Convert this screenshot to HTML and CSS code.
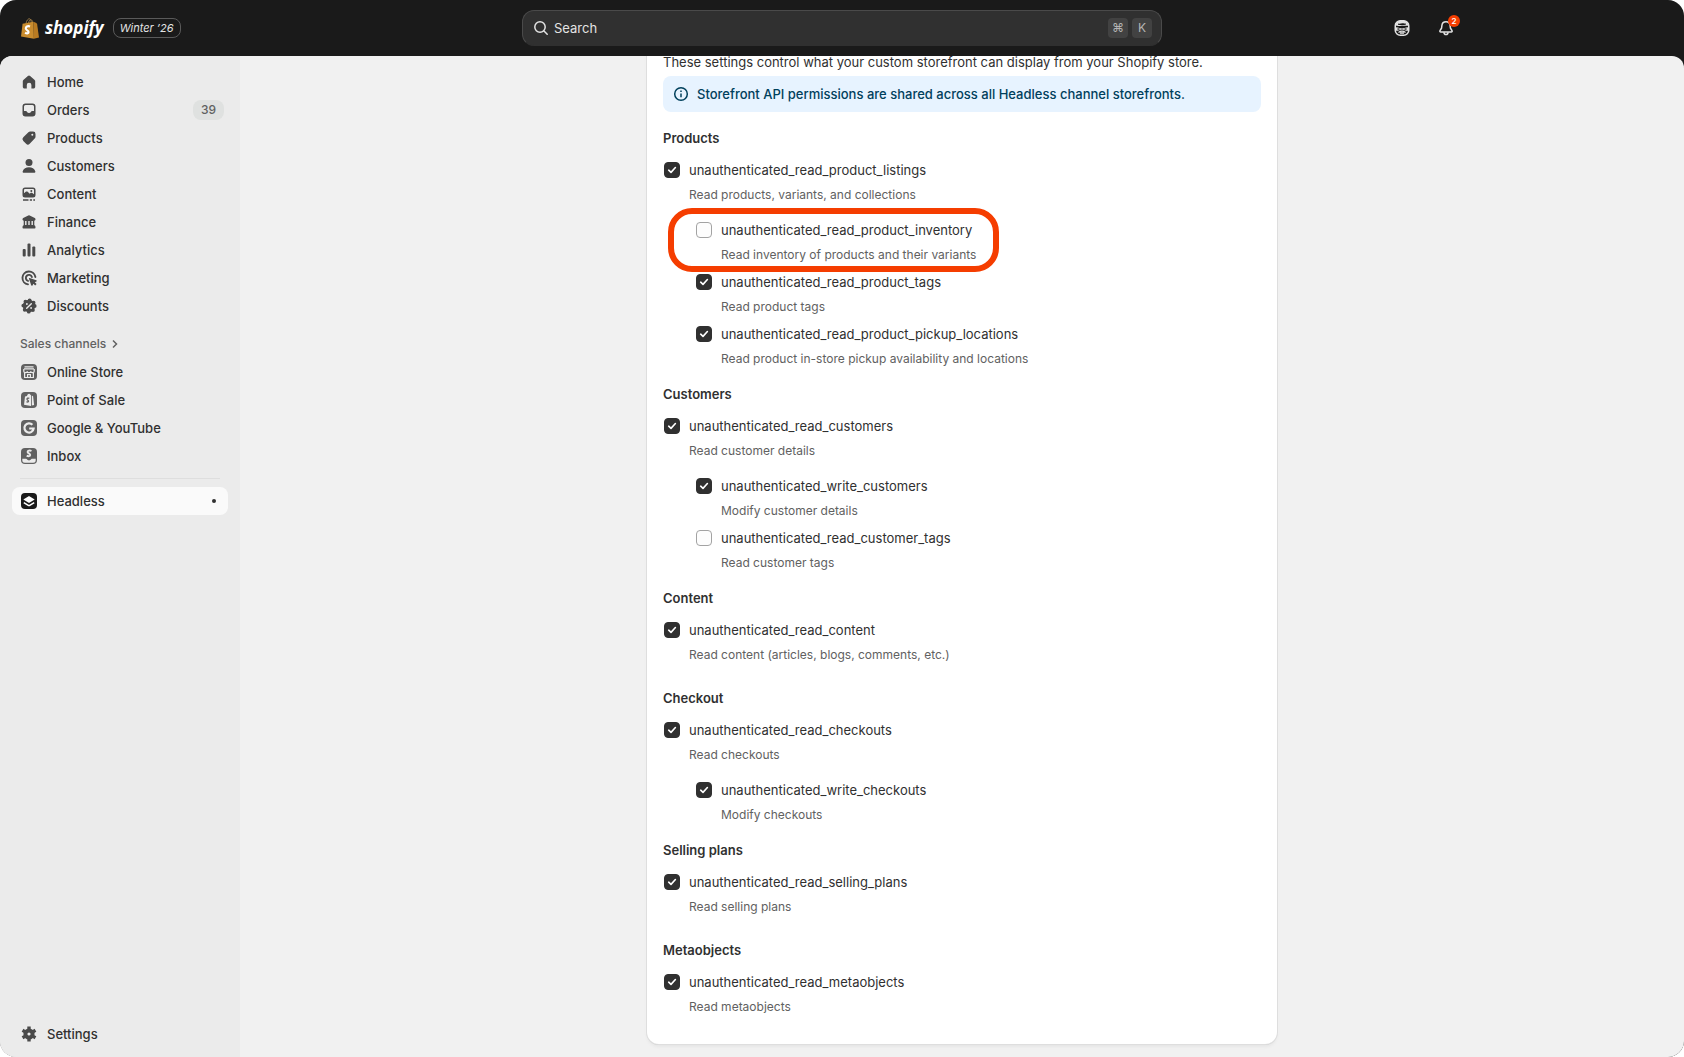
FILE: index.html
```html
<!DOCTYPE html>
<html lang="en">
<head>
    <meta charset="UTF-8">
    <meta name="viewport" content="width=device-width, initial-scale=1.0">
    <title>Headless - Storefront API permissions</title>
    <link rel="stylesheet" href="styles.css">
</head>
<body>
<div class="app">
    <header class="topbar">
        <div class="topbar-left">
            <a class="brand" href="#" aria-label="Shopify home">
                <svg class="bag" viewBox="0 0 18 21">
                    <path d="M5 5.500C5.500 2.500 7 .8 8.300.8s1.900 1.500 2 4M7.600 5C8 2.500 9 1.500 10 1.700s1.500 1.500 1.700 2.800" fill="none" stroke="#9a7a45" stroke-width="1"/>
                    <path d="M1.600 5.800 12.500 3.800l.4 17L0 18.600z" fill="#c98c2e"/>
                    <path d="m12.500 3.800 2.800 1.100.8 1L18 19.400l-5.100 1.400z" fill="#b97b22"/>
                    <path d="M9 8.500C6.500 7.500 4.700 8.800 4.800 10.500c.1 1.800 2.900 2 2.800 3.700-.1 1.400-2 1.500-3.500.4" fill="none" stroke="#fff" stroke-width="2.100"/>
                </svg>
                <span class="brand-name">shopify</span>
            </a>
            <a class="edition" href="#">Winter ’26</a>
        </div>
        <button class="search" type="button">
            <svg class="search-icon" viewBox="0 0 16 16"><circle cx="7" cy="7" r="5.200"/><path d="m11 11 3.200 3.200"/></svg>
            <span class="search-text">Search</span>
            <kbd>⌘</kbd>
            <kbd>K</kbd>
        </button>
        <div class="actions">
            <button class="icon-btn" type="button" aria-label="Sidekick">
                <svg viewBox="0 0 16 18">
                    <rect x="1.250" y="1.750" width="13.500" height="14.500" rx="5" fill="none" stroke="#e3e3e3" stroke-width="1.500"/>
                    <path d="M1.500 6.500C2 3.500 4 1.500 8 1.500s6 2 6.500 5c-1.500.7-3.500.2-5.500.2-3 0-5 .7-7.500-.2z" fill="#e3e3e3"/>
                    <path d="M4 4.500c2 .6 3-.2 4.500-.2 1.700 0 2 .6 3.500.3v1c-2 .8-6 .6-8 .2z" fill="#1a1a1a"/>
                    <path d="M1.500 8.200c3-.2 4.700 1.300 6.500 1.300s3.500-1.500 6.500-1.300v3.600c-2.500.3-4.500-1.300-6.500-1.300s-4 1.600-6.500 1.300z" fill="#e3e3e3"/>
                    <path d="M3.500 9.300c1.200 0 2 .3 2.600.7-.6.6-1.700.9-2.600.7zM12.500 9.300c-1.200 0-2 .3-2.600.7.600.6 1.700.9 2.600.7z" fill="#1a1a1a"/>
                    <path d="M4.500 13.500c2-1.500 5-1.500 7 0M6 14h4" fill="none" stroke="#e3e3e3" stroke-width="1.300"/>
                </svg>
            </button>
            <button class="icon-btn" type="button" aria-label="Notifications, 2 unread">
                <svg viewBox="0 0 16 18" fill="none" stroke="#e3e3e3" stroke-width="1.500" stroke-linejoin="round">
                    <path d="M8 2.700C5.400 2.700 4.100 4.300 3.900 6.500L3.600 9 2 11.600c-.4.700 0 1.400.8 1.400h10.400c.8 0 1.200-.7.800-1.400L12.400 9l-.3-2.500C11.900 4.300 10.600 2.700 8 2.700z"/>
                    <path d="M6 13.200c0 3.200 4 3.200 4 0"/>
                </svg>
                <span class="count">2</span>
            </button>
        </div>
    </header>

    <div class="frame">
        <nav class="sidebar">
            <ul class="nav-list">
                <li><a href="#">
                    <svg viewBox="0 0 20 20"><path d="M8.900 3.900a1.700 1.700 0 0 1 2.200 0l4.300 3.800c.5.400.8.900.8 1.400v5.600c0 1-.8 1.800-1.800 1.800h-2V13a2.300 2.300 0 0 0-4.600 0v3.500H5.600c-1 0-1.800-.8-1.800-1.800V9.100c0-.5.300-1 .8-1.400z"/></svg>
                    <span>Home</span></a></li>
                <li><a href="#">
                    <svg viewBox="0 0 20 20"><path fill-rule="evenodd" d="M6.500 3.500h7a3 3 0 0 1 3 3v7a3 3 0 0 1-3 3h-7a3 3 0 0 1-3-3v-7a3 3 0 0 1 3-3zM6.500 5A1.500 1.500 0 0 0 5 6.500V11h1.800c.7 0 1 .4 1.300.9.400.7 1 1.100 1.900 1.100s1.500-.4 1.900-1.100c.3-.5.600-.9 1.300-.9H15V6.500A1.500 1.500 0 0 0 13.500 5z"/></svg>
                    <span>Orders</span><em class="tally">39</em></a></li>
                <li><a href="#">
                    <svg viewBox="0 0 20 20"><path fill-rule="evenodd" d="M11.200 3.600h2.900a2.400 2.400 0 0 1 2.400 2.400v2.800c0 .7-.3 1.300-.8 1.800l-5 5.100a2.500 2.500 0 0 1-3.600 0l-2.800-2.800a2.500 2.500 0 0 1 0-3.600l5.100-5c.5-.5 1.100-.7 1.800-.7zM13.300 7.700a1 1 0 1 0 0-2 1 1 0 0 0 0 2z"/></svg>
                    <span>Products</span></a></li>
                <li><a href="#">
                    <svg viewBox="0 0 20 20"><circle cx="10" cy="6.500" r="3.500"/><path d="M3.700 15.200c.8-2.600 3.300-4 6.300-4s5.500 1.400 6.300 4c.3 1-.4 1.600-1.300 1.600H5c-.9 0-1.600-.6-1.300-1.600z"/></svg>
                    <span>Customers</span></a></li>
                <li><a href="#">
                    <svg viewBox="0 0 20 20"><path fill-rule="evenodd" d="M6 3.500h8a2.500 2.500 0 0 1 2.500 2.500v5a2.500 2.500 0 0 1-2.500 2.500H6A2.500 2.500 0 0 1 3.500 11V6A2.500 2.500 0 0 1 6 3.500zM6 5a1 1 0 0 0-1 1v3.200l1.700-1.400c.7-.5 1.400-.5 2 0l2 1.900.8-.6c.6-.4 1.200-.4 1.800 0l1.700 1.200V6a1 1 0 0 0-1-1z"/><circle cx="12.300" cy="6.900" r="1"/><path d="M4 15.300h5.500v1.400H4zM10.800 15.300H13v1.400h-2.200zM14.300 15.300H16v1.400h-1.700z"/></svg>
                    <span>Content</span></a></li>
                <li><a href="#">
                    <svg viewBox="0 0 20 20"><path d="M9.300 3.500a1.800 1.800 0 0 1 1.400 0L15.800 6c1.200.6.900 2.700-.5 2.700v4.600c.9.300 1.200 1 1.200 2.200 0 .5-.3.900-.8.900H4.300c-.5 0-.8-.4-.8-.9 0-1.200.3-1.900 1.200-2.200V8.700c-1.400 0-1.700-2.100-.5-2.700z"/><path d="M6.800 9v4M10 9v4M13.200 9v4" stroke="#ebebeb" stroke-width="1.400"/></svg>
                    <span>Finance</span></a></li>
                <li><a href="#">
                    <svg viewBox="0 0 20 20"><rect x="3.700" y="9" width="3" height="7.500" rx="1"/><rect x="8.500" y="3.500" width="3" height="13" rx="1"/><rect x="13.300" y="6.500" width="3" height="10" rx="1"/></svg>
                    <span>Analytics</span></a></li>
                <li><a href="#">
                    <svg viewBox="0 0 20 20"><path d="M16.400 9A6.500 6.500 0 1 0 9 16.400M12.900 9A3.100 3.100 0 1 0 9 12.900" fill="none" stroke="#4a4a4a" stroke-width="1.900" stroke-linecap="round"/><path d="m10.600 9.900 6.700 2.300c.6.200.6 1 .1 1.300l-1.600.8 1.800 1.800-1.400 1.400-1.800-1.800-.9 1.700c-.3.500-1.100.5-1.300-.1l-2.300-6.700c-.1-.4.300-.8.700-.7z"/></svg>
                    <span>Marketing</span></a></li>
                <li><a href="#">
                    <svg viewBox="0 0 20 20"><circle cx="10" cy="10" r="6.200"/><circle cx="10" cy="10" r="5.700" fill="none" stroke="#4a4a4a" stroke-width="3.800" stroke-linecap="round" stroke-dasharray="0 4.477"/><path d="m7.700 12.300 4.600-4.600" stroke="#ebebeb" stroke-width="1.400" stroke-linecap="round"/><circle cx="7.900" cy="8" r=".9" fill="#ebebeb"/><circle cx="12.100" cy="12" r=".9" fill="#ebebeb"/></svg>
                    <span>Discounts</span></a></li>
            </ul>

            <a class="nav-heading" href="#">Sales channels
                <svg viewBox="0 0 8 10"><path d="m2 1.500 3.500 3.500L2 8.500"/></svg>
            </a>
            <ul class="nav-list">
                <li><a href="#">
                    <svg viewBox="0 0 20 20"><rect x="2" y="2" width="16" height="16" rx="4" fill="#616161"/><path d="M5.500 4.800h9M5 6.800h10M4.800 7v2.200c0 2 3.400 2 3.400 0 0 2 3.600 2 3.600 0 0 2 3.400 2 3.400 0V7M5.600 11v4.500h8.800V11M8.600 15.500v-3h2.800v3" fill="none" stroke="#ebebeb" stroke-width="1.200"/></svg>
                    <span>Online Store</span></a></li>
                <li><a href="#">
                    <svg viewBox="0 0 20 20"><rect x="2" y="2" width="16" height="16" rx="4" fill="#616161"/><path d="M6 6.500 8 6c.4-1.800 1.500-2.500 2.300-2.300L12 5.300v10.600l-7-1.200zM12.800 5.500l1.300.7 1 8.800-2.300.6z" fill="#ebebeb"/><path d="M10.300 8.300c-1.400-.6-2.400 0-2.300.9.100 1 1.600 1.100 1.500 2.100 0 .8-1.100.9-2 .3" fill="none" stroke="#616161" stroke-width="1.300"/></svg>
                    <span>Point of Sale</span></a></li>
                <li><a href="#">
                    <svg viewBox="0 0 20 20"><rect x="2" y="2" width="16" height="16" rx="4" fill="#616161"/><path d="M13.400 6.800A4.600 4.600 0 1 0 14.600 10.500H10.200" fill="none" stroke="#ebebeb" stroke-width="2.200"/></svg>
                    <span>Google &amp; YouTube</span></a></li>
                <li><a href="#">
                    <svg viewBox="0 0 20 20"><rect x="2" y="2" width="16" height="16" rx="4" fill="#616161"/><path d="M3.300 12.800h3.900c.6 0 .8 1.600 2.800 1.600s2.200-1.600 2.800-1.600h3.900v1.400a2.500 2.500 0 0 1-2.500 2.500H5.800a2.500 2.500 0 0 1-2.500-2.500z" fill="#ebebeb"/><path d="M12.500 5c-2-1-3.900-.3-3.900 1 0 1.500 2.700 1.400 2.600 3-.1 1.400-2 1.500-3.500.6" fill="none" stroke="#ebebeb" stroke-width="1.900"/></svg>
                    <span>Inbox</span></a></li>
            </ul>

            <hr class="nav-rule">
            <ul class="nav-list">
                <li><a class="active" href="#" aria-current="page">
                    <svg viewBox="0 0 20 20"><rect x="2" y="2" width="16" height="16" rx="4" fill="#1a1a1a"/><path d="m4.300 8.500 4.900-3.100c.5-.3 1.100-.3 1.600 0l4.900 3.100-4.900 3c-.5.300-1.100.3-1.600 0z" fill="#fff"/><path d="m4.800 11.600 4.500 2.700c.4.300 1 .3 1.400 0l4.500-2.700" fill="none" stroke="#fff" stroke-width="1.500"/></svg>
                    <span>Headless</span><i class="dot"></i></a></li>
            </ul>

            <ul class="nav-list nav-bottom">
                <li><a href="#">
                    <svg viewBox="0 0 20 20"><circle cx="10" cy="10" r="3.600" fill="none" stroke="#4a4a4a" stroke-width="4"/><path d="M10 4.200v2M10 13.800v2M5 7.100l1.700 1M13.300 11.900l1.700 1M5 12.900l1.700-1M13.300 8.100l1.700-1" stroke="#4a4a4a" stroke-width="3.400" stroke-linecap="square"/></svg>
                    <span>Settings</span></a></li>
            </ul>
        </nav>

        <main class="content">
            <section class="card">
                <p class="intro">These settings control what your custom storefront can display from your Shopify store.</p>
                <div class="banner">
                    <svg viewBox="0 0 16 16"><circle cx="8" cy="8" r="6.300"/><path d="M8 7.500v3.700M8 4.400v1.500"/></svg>
                    <p>Storefront API permissions are shared across all Headless channel storefronts.</p>
                </div>

                <fieldset class="group">
                    <legend>Products</legend>
                    <div class="scope">
                        <input type="checkbox" id="product-listings" checked>
                        <label for="product-listings">unauthenticated_read_product_listings</label>
                        <p>Read products, variants, and collections</p>
                    </div>
                    <div class="nested">
                        <div class="scope highlight">
                            <input type="checkbox" id="product-inventory">
                            <label for="product-inventory">unauthenticated_read_product_inventory</label>
                            <p>Read inventory of products and their variants</p>
                        </div>
                        <div class="scope">
                            <input type="checkbox" id="product-tags" checked>
                            <label for="product-tags">unauthenticated_read_product_tags</label>
                            <p>Read product tags</p>
                        </div>
                        <div class="scope">
                            <input type="checkbox" id="pickup-locations" checked>
                            <label for="pickup-locations">unauthenticated_read_product_pickup_locations</label>
                            <p>Read product in-store pickup availability and locations</p>
                        </div>
                    </div>
                </fieldset>

                <fieldset class="group">
                    <legend>Customers</legend>
                    <div class="scope">
                        <input type="checkbox" id="read-customers" checked>
                        <label for="read-customers">unauthenticated_read_customers</label>
                        <p>Read customer details</p>
                    </div>
                    <div class="nested">
                        <div class="scope">
                            <input type="checkbox" id="write-customers" checked>
                            <label for="write-customers">unauthenticated_write_customers</label>
                            <p>Modify customer details</p>
                        </div>
                        <div class="scope">
                            <input type="checkbox" id="customer-tags">
                            <label for="customer-tags">unauthenticated_read_customer_tags</label>
                            <p>Read customer tags</p>
                        </div>
                    </div>
                </fieldset>

                <fieldset class="group">
                    <legend>Content</legend>
                    <div class="scope">
                        <input type="checkbox" id="read-content" checked>
                        <label for="read-content">unauthenticated_read_content</label>
                        <p>Read content (articles, blogs, comments, etc.)</p>
                    </div>
                    <div class="nested"></div>
                </fieldset>

                <fieldset class="group">
                    <legend>Checkout</legend>
                    <div class="scope">
                        <input type="checkbox" id="read-checkouts" checked>
                        <label for="read-checkouts">unauthenticated_read_checkouts</label>
                        <p>Read checkouts</p>
                    </div>
                    <div class="nested">
                        <div class="scope">
                            <input type="checkbox" id="write-checkouts" checked>
                            <label for="write-checkouts">unauthenticated_write_checkouts</label>
                            <p>Modify checkouts</p>
                        </div>
                    </div>
                </fieldset>

                <fieldset class="group">
                    <legend>Selling plans</legend>
                    <div class="scope">
                        <input type="checkbox" id="selling-plans" checked>
                        <label for="selling-plans">unauthenticated_read_selling_plans</label>
                        <p>Read selling plans</p>
                    </div>
                    <div class="nested"></div>
                </fieldset>

                <fieldset class="group">
                    <legend>Metaobjects</legend>
                    <div class="scope">
                        <input type="checkbox" id="metaobjects" checked>
                        <label for="metaobjects">unauthenticated_read_metaobjects</label>
                        <p>Read metaobjects</p>
                    </div>
                    <div class="nested"></div>
                </fieldset>
            </section>
        </main>
    </div>
</div>
</body>
</html>
```
FILE: styles.css
```css
* {
    box-sizing: border-box;
}
body {
    margin: 0;
    background: #fff;
    color: #303030;
    font-family: Inter, "Liberation Sans", sans-serif;
    font-size: 13px;
    line-height: 20px;
}
p, ul {
    margin: 0;
    padding: 0;
}
ul {
    list-style: none;
}
a {
    color: inherit;
    text-decoration: none;
}
button {
    font: inherit;
    color: inherit;
    border: 0;
    padding: 0;
    background: none;
}
.app {
    display: flex;
    flex-direction: column;
    height: 100vh;
    background: #1a1a1a;
    border-radius: 16px;
    overflow: hidden;
}

/* Top bar */
.topbar {
    display: grid;
    grid-template-columns: 1fr minmax(auto, 640px) 1fr;
    align-items: center;
    height: 56px;
    flex: none;
    padding: 0 21px;
    color: #e3e3e3;
}
.topbar-left {
    display: flex;
    align-items: center;
    gap: 9px;
}
.brand {
    display: flex;
    align-items: center;
    gap: 6px;
}
.bag {
    width: 18px;
    height: 21px;
}
.brand-name {
    color: #fff;
    font-family: "Noto Sans", "Open Sans", sans-serif;
    font-size: 17px;
    font-style: italic;
    font-weight: 700;
}
.edition {
    padding: 0 6px;
    border: 1px solid #5a5a5a;
    border-radius: 8px;
    font-size: 11px;
    line-height: 18px;
    font-style: italic;
}
.search {
    display: flex;
    align-items: center;
    height: 36px;
    padding: 0 9px 0 10px;
    background: #303030;
    border: 1px solid #4a4a4a;
    border-bottom-color: #303030;
    border-radius: 12px;
    text-align: left;
}
.search-icon {
    width: 16px;
    height: 16px;
    margin-right: 5px;
    fill: none;
    stroke: #e3e3e3;
    stroke-width: 1.5;
    stroke-linecap: round;
}
.search-text {
    flex: 1;
}
kbd {
    width: 20px;
    margin-left: 4px;
    border-radius: 4px;
    background: #424242;
    color: #b5b5b5;
    font-family: Inter, "DejaVu Sans", sans-serif;
    font-size: 12px;
    text-align: center;
}
.actions {
    display: flex;
    justify-self: end;
    gap: 28px;
    margin-right: 209px;
}
.icon-btn {
    position: relative;
    display: flex;
}
.icon-btn svg {
    width: 16px;
    height: 18px;
}
.count {
    position: absolute;
    top: -4px;
    right: -6px;
    width: 12px;
    border-radius: 6px;
    background: #f53d00;
    color: #fff;
    font-size: 8px;
    line-height: 12px;
    font-weight: 600;
}

.frame {
    display: flex;
    flex: 1;
    min-height: 0;
    border-radius: 12px 12px 0 0;
    background: #f1f1f1;
    overflow: hidden;
}

/* Sidebar */
.sidebar {
    display: flex;
    flex-direction: column;
    flex: none;
    width: 240px;
    padding: 12px 12px 9px;
    background: #ebebeb;
}
.nav-list a {
    display: flex;
    align-items: center;
    gap: 8px;
    height: 28px;
    padding: 0 4px 0 7px;
    border-radius: 8px;
    font-weight: 500;
}
.nav-list svg {
    width: 20px;
    height: 20px;
    fill: #4a4a4a;
}
.nav-list span {
    flex: 1;
}
.tally {
    padding: 0 8px;
    border-radius: 8px;
    background: #dfe1e0;
    color: #616161;
    font-size: 12px;
    font-style: normal;
}
.nav-list .active {
    background: #fafafa;
}
.dot {
    width: 4px;
    height: 4px;
    margin-right: 8px;
    border-radius: 2px;
    background: #303030;
}
.nav-heading {
    display: flex;
    align-items: center;
    gap: 5px;
    margin-top: 10px;
    padding: 4px 8px;
    color: #616161;
    font-size: 12px;
    font-weight: 500;
}
.nav-heading svg {
    width: 8px;
    height: 10px;
    fill: none;
    stroke: #616161;
    stroke-width: 1.5;
}
.nav-rule {
    margin: 8px;
    border: 0;
    border-top: 1px solid #dedede;
}
.nav-bottom {
    margin-top: auto;
}

/* Permissions card */
.content {
    flex: 1;
    overflow: hidden;
    padding-bottom: 13px;
}
.card {
    max-width: 630px;
    margin: -20px auto 0;
    padding: 16px 16px 19px;
    background: #fff;
    border-radius: 12px;
    box-shadow: 0 0 0 1px #dedede, 0 1px 0 #cccccc, 0 3px 3px #e6e6e6;
}
.banner {
    display: flex;
    align-items: center;
    gap: 8px;
    margin: 4px 0 16px;
    padding: 8px 10px;
    border-radius: 8px;
    background: #e7f3ff;
    color: #00405c;
    font-weight: 500;
}
.banner svg {
    width: 16px;
    height: 16px;
    fill: none;
    stroke: #00405c;
    stroke-width: 1.5;
}
.group {
    min-width: 0;
    margin: 0 0 15px;
    padding: 0;
    border: 0;
}
.group:last-child {
    margin-bottom: 0;
}
.group legend {
    margin-bottom: 12px;
    padding: 0;
    font-weight: 600;
}
.scope {
    display: grid;
    grid-template-columns: 18px auto;
    column-gap: 8px;
    row-gap: 5px;
    width: fit-content;
    align-items: center;
}
.scope p {
    grid-column: 2;
    color: #616161;
    font-size: 12px;
}
.scope input {
    appearance: none;
    width: 16px;
    height: 16px;
    margin: 0 1px;
    border: 1px solid #a3a3a3;
    border-radius: 4px;
    background: #fdfdfd;
}
.scope input:checked {
    border-color: #303030;
    background: #303030 url("data:image/svg+xml,%3Csvg xmlns='http://www.w3.org/2000/svg' viewBox='0 0 14 14'%3E%3Cpath d='M3.700 7.200 6 9.400l4.400-4.900' fill='none' stroke='white' stroke-width='1.600' stroke-linecap='round' stroke-linejoin='round'/%3E%3C/svg%3E") center / 14px no-repeat;
}
.nested {
    display: grid;
    gap: 7px;
    margin-top: 8px;
    padding-left: 32px;
}
.nested .scope:first-child {
    margin-top: 7px;
}
.highlight {
    position: relative;
}
.highlight::after {
    content: "";
    position: absolute;
    inset: -12px -23px -7px -27px;
    border: 6px solid #f53d00;
    border-radius: 24px;
    pointer-events: none;
}
```
